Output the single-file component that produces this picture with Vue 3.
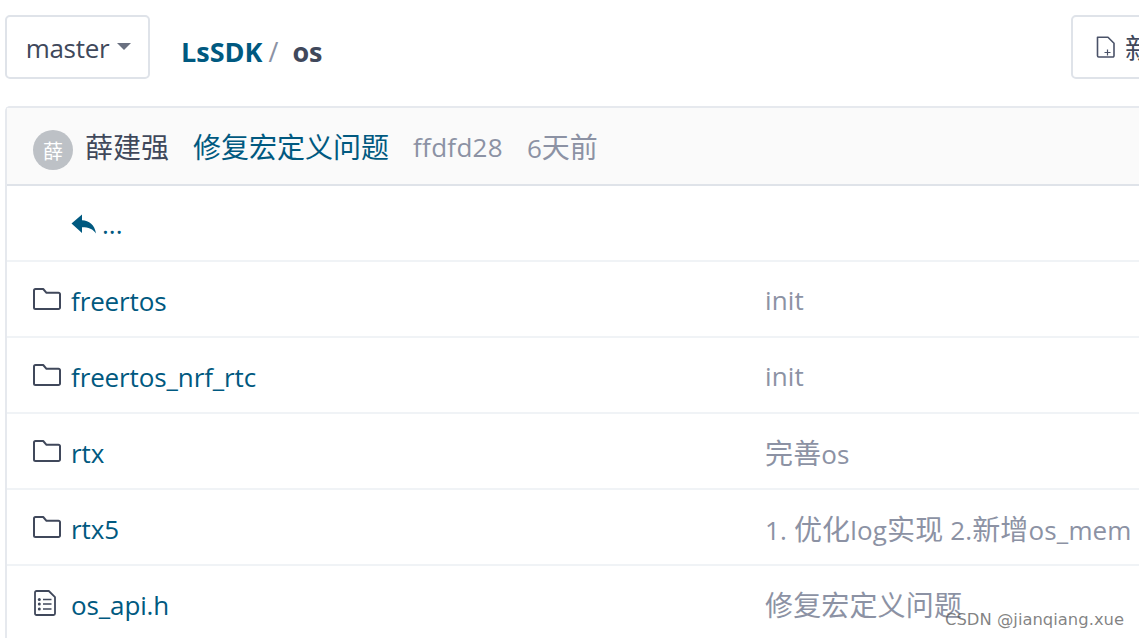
<template>
  <div class="page">
    <div class="inner">
      <div class="toolbar">
        <button class="branch">master<span class="caret"></span></button>
        <div class="crumbs">
          <a class="repo">LsSDK</a>
          <span class="sep">/</span>
          <strong class="dir">os</strong>
        </div>
        <button class="new-file">
          <svg width="20" height="24" viewBox="0 0 20 24" fill="none" stroke="#4a5268" stroke-width="1.6">
            <path d="M1.500 2.300h10.500l6 6v12.500a1.200 1.200 0 0 1-1.200 1.200H2.700a1.200 1.200 0 0 1-1.200-1.200z" stroke-linejoin="round" />
            <path d="M8.500 17.500h6M11.500 14.500v6" stroke-width="1.200" />
          </svg>
          <span class="cjk">新建文件</span>
        </button>
      </div>

      <div class="box">
        <div class="commit">
          <span class="avatar">薛</span>
          <span class="author cjk">薛建强</span>
          <a class="message cjk">修复宏定义问题</a>
          <span class="sha">ffdfd28</span>
          <span class="when"><template v-for="(s, i) in split('6天前')" :key="i"><span :class="{ cjk: s.cjk }">{{ s.text }}</span></template></span>
        </div>

        <div class="row parent">
          <svg class="back" width="26" height="24" viewBox="0 0 26 24">
            <path fill="#005980" d="M0.500 11.500 11 2.500v5.800c7 .3 12.800 4.500 14 13.200-2.800-4.400-7.500-6.200-14-6.200v5.700z" />
          </svg>
          <a class="dots">...</a>
        </div>

        <div v-for="item in items" :key="item.name" class="row">
          <svg v-if="item.type === 'dir'" class="icon" width="30" height="26" viewBox="0 0 30 26" fill="none" stroke="#40485b" stroke-width="2">
            <path d="M2 3.500A1.500 1.500 0 0 1 3.500 2h7.700l3.300 3.800h12a1.500 1.500 0 0 1 1.500 1.500v13.200a1.500 1.500 0 0 1-1.500 1.500h-23A1.500 1.500 0 0 1 2 20.500z" stroke-linejoin="round" />
          </svg>
          <svg v-else class="icon file" width="30" height="28" viewBox="0 0 30 28" fill="none" stroke="#40485b" stroke-width="1.800">
            <path d="M3 3.500A1.500 1.500 0 0 1 4.500 2h12.300L23 8.200v16.300a1.500 1.500 0 0 1-1.500 1.500h-17A1.500 1.500 0 0 1 3 24.500z" stroke-linejoin="round" />
            <path d="M11 10.500h8.500M11 15h8.500M11 20h8.500" stroke-width="1.500" />
            <circle cx="7.300" cy="10.500" r="1.500" fill="#40485b" stroke="none" />
            <circle cx="7.300" cy="15" r="1.500" fill="#40485b" stroke="none" />
            <circle cx="7.300" cy="20" r="1.500" fill="#40485b" stroke="none" />
          </svg>
          <a class="name">{{ item.name }}</a>
          <span class="log"><template v-for="(s, i) in split(item.log)" :key="i"><span :class="{ cjk: s.cjk }">{{ s.text }}</span></template></span>
        </div>
      </div>
    </div>
    <div class="watermark">CSDN @jianqiang.xue</div>
  </div>
</template>

<script setup>
const items = [
  { type: 'dir', name: 'freertos', log: 'init' },
  { type: 'dir', name: 'freertos_nrf_rtc', log: 'init' },
  { type: 'dir', name: 'rtx', log: '完善os' },
  { type: 'dir', name: 'rtx5', log: '1. 优化log实现 2.新增os_mem' },
  { type: 'file', name: 'os_api.h', log: '修复宏定义问题' }
]

// the chinese glyphs run a bit larger than the latin ones
const split = (text) =>
  text.split(/([\u4e00-\u9fff]+)/).filter(Boolean).map((t) => ({
    text: t,
    cjk: /[\u4e00-\u9fff]/.test(t)
  }))
</script>

<style>
html,
body {
  margin: 0;
  background: #fff;
  overflow: hidden;
}
</style>

<style scoped>
.page {
  position: relative;
  width: 1139px;
  height: 638px;
  overflow: hidden;
  background: #fff;
  font-family: "Open Sans", "Noto Sans CJK SC", sans-serif;
  font-size: 26px;
  color: #40485b;
}

.cjk {
  font-size: 28px;
}

.inner {
  width: 1300px;
  padding: 15px 0 0 5px;
}

.toolbar {
  display: flex;
  align-items: center;
  height: 64px;
}

button {
  font: inherit;
  color: inherit;
  background: #fff;
  border: 2px solid #dfe3e9;
  border-radius: 5px;
  box-sizing: border-box;
  height: 64px;
}

.branch {
  width: 145px;
  display: flex;
  align-items: center;
  justify-content: center;
  gap: 8px;
  padding: 2px 0 0 2px;
  letter-spacing: -0.3px;
}

.caret {
  width: 0;
  height: 0;
  border-left: 7px solid transparent;
  border-right: 7px solid transparent;
  border-top: 7px solid #6a7080;
  margin-bottom: 3px;
}

.crumbs {
  display: flex;
  align-items: baseline;
  margin-left: 31px;
  margin-top: 9px;
  font-size: 27px;
}

.repo {
  color: #005980;
  font-weight: 700;
}

.sep {
  color: #8c92a4;
  margin-left: 6px;
}

.dir {
  margin-left: 14px;
  font-weight: 700;
}

.new-file {
  margin-left: auto;
  width: 234px;
  display: flex;
  align-items: center;
  gap: 9px;
  padding: 0 0 0 23px;
}

.box {
  margin-top: 27px;
  border: 2px solid #e6e9ee;
  border-right: 0;
  border-radius: 5px 0 0 0;
}

.commit {
  display: flex;
  align-items: center;
  height: 76px;
  padding-left: 26px;
  background: #fafafa;
  border-bottom: 2px solid #dfe3e9;
}

.avatar {
  width: 40px;
  height: 40px;
  margin-top: 8px;
  border-radius: 50%;
  background: #bdc1c6;
  color: #fff;
  font-size: 20px;
  display: flex;
  align-items: center;
  justify-content: center;
}

.author {
  margin-left: 12px;
}

.message {
  margin-left: 24px;
  color: #005980;
}

.sha,
.when,
.log {
  color: #8c92a4;
}

.sha {
  margin-left: 24px;
  padding-top: 2px;
  letter-spacing: 0.3px;
}

.when {
  margin-left: 24px;
}

.row {
  display: flex;
  align-items: center;
  height: 74px;
  padding-left: 25px;
  border-bottom: 2px solid #f0f3f6;
}

.parent {
  padding-left: 64px;
}

.back {
  margin-top: 2px;
}

.dots {
  color: #005980;
  margin-left: 5px;
  padding-top: 2px;
  line-height: 1;
}

.icon {
  flex: none;
  margin-top: 2px;
}

.icon.file {
  margin-top: 0;
}

.name {
  color: #005980;
  margin-left: 9px;
  padding-top: 4px;
  width: 694px;
  flex: none;
  letter-spacing: -0.12px;
}

.log {
  padding-top: 2px;
  letter-spacing: 0.15px;
}

.watermark {
  position: absolute;
  left: 945px;
  top: 610px;
  font-family: "DejaVu Sans", sans-serif;
  font-size: 16.4px;
  color: rgba(90, 90, 90, 0.75);
  white-space: nowrap;
}
</style>
